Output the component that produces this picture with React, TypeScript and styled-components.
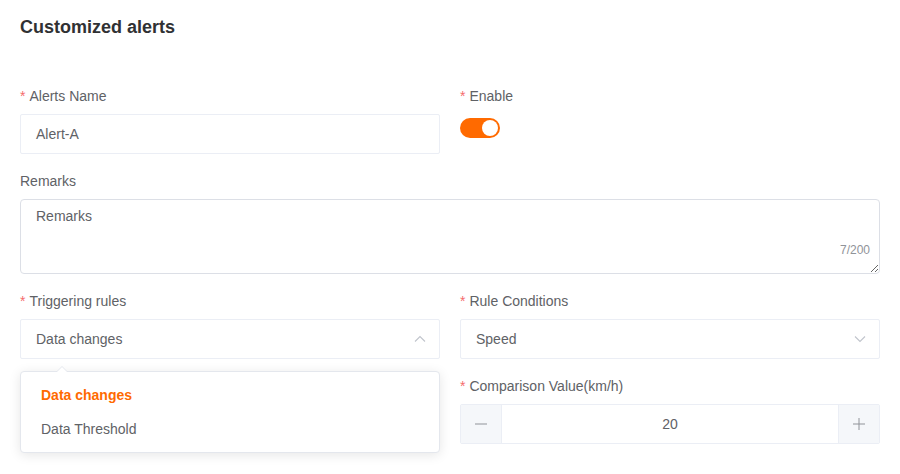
import React from "react";
import styled, { createGlobalStyle } from "styled-components";

const GlobalStyle = createGlobalStyle`
  html, body {
    margin: 0;
    padding: 0;
    background: #ffffff;
  }
  body {
    font-family: "Liberation Sans", Arial, Helvetica, sans-serif;
    color: #606266;
  }
  * {
    box-sizing: border-box;
  }
`;

const Page = styled.div`
  width: 900px;
  height: 474px;
  padding: 16px 20px 0;
  overflow: hidden;
`;

const Title = styled.h2`
  margin: 0;
  height: 22px;
  line-height: 22px;
  font-size: 18px;
  font-weight: 700;
  color: #303133;
`;

const Form = styled.div`
  margin-top: 48px;
  display: grid;
  grid-template-columns: 420px 420px;
  column-gap: 20px;
`;

const Item = styled.div<{ $full?: boolean }>`
  grid-column: ${(p) => (p.$full ? "1 / span 2" : "auto")};
  margin-bottom: 17px;
  position: relative;
`;

const Label = styled.div<{ $required?: boolean }>`
  height: 20px;
  line-height: 20px;
  margin-bottom: 8px;
  font-size: 14px;
  color: #606266;

  &::before {
    content: ${(p) => (p.$required ? '"*"' : "none")};
    color: #f56c6c;
    margin-right: 4px;
  }
`;

const Field = styled.div`
  height: 40px;
  border: 1px solid #ebeef5;
  border-radius: 2px;
  padding: 0 15px;
  display: flex;
  align-items: center;
  justify-content: space-between;
  font-size: 14px;
  color: #606266;
  background: #fff;
`;

const Chevron = styled.svg`
  width: 14px;
  height: 14px;
  margin-right: -3px;
`;

const Switch = styled.div<{ $on?: boolean }>`
  margin-top: 12px;
  width: 40px;
  height: 20px;
  border-radius: 10px;
  background: ${(p) => (p.$on ? "#ff6a00" : "#dcdfe6")};
  position: relative;

  &::after {
    content: "";
    position: absolute;
    top: 2px;
    left: ${(p) => (p.$on ? "22px" : "2px")};
    width: 16px;
    height: 16px;
    border-radius: 50%;
    background: #fff;
  }
`;

const AreaWrap = styled.div`
  position: relative;
  height: 75px;
`;

const TextArea = styled.textarea`
  display: block;
  width: 100%;
  height: 75px;
  padding: 6px 15px;
  border: 1px solid #dcdfe6;
  border-radius: 4px;
  font-family: "Liberation Sans", Arial, sans-serif;
  font-size: 14px;
  line-height: 20px;
  color: #606266;
  resize: vertical;
  outline: none;
`;

const Count = styled.span`
  position: absolute;
  right: 10px;
  bottom: 17px;
  font-size: 12px;
  color: #909399;
  background: #fff;
`;

const Dropdown = styled.div`
  position: absolute;
  top: 80px;
  left: 0;
  width: 420px;
  padding: 6px 0;
  background: #fff;
  border: 1px solid #e4e7ed;
  border-radius: 4px;
  box-shadow: 0 2px 12px 0 rgba(0, 0, 0, 0.1);
  z-index: 5;

  &::before {
    content: "";
    position: absolute;
    top: -6px;
    left: 35px;
    border-width: 0 6px 6px;
    border-style: solid;
    border-color: transparent transparent #e4e7ed;
  }
  &::after {
    content: "";
    position: absolute;
    top: -5px;
    left: 35px;
    border-width: 0 6px 6px;
    border-style: solid;
    border-color: transparent transparent #fff;
  }
`;

const Option = styled.div<{ $selected?: boolean }>`
  height: 34px;
  line-height: 34px;
  padding: 0 20px;
  font-size: 14px;
  font-weight: ${(p) => (p.$selected ? 700 : 400)};
  color: ${(p) => (p.$selected ? "#ff6a00" : "#606266")};
`;

const Stepper = styled.div`
  height: 40px;
  display: flex;
  border: 1px solid #ebeef5;
  border-radius: 2px;
  overflow: hidden;
`;

const StepButton = styled.div<{ $side: "left" | "right" }>`
  width: 41px;
  flex: none;
  background: #f5f7fa;
  display: flex;
  align-items: center;
  justify-content: center;
  color: #909399;
  border-${(p) => (p.$side === "left" ? "right" : "left")}: 1px solid #ebeef5;
`;

const StepValue = styled.div`
  flex: 1;
  display: flex;
  align-items: center;
  justify-content: center;
  font-size: 14px;
  color: #606266;
`;

const ChevronIcon = ({ up }: { up?: boolean }) => (
  <Chevron viewBox="0 0 14 14" fill="none">
    <path
      d={up ? "M2 9.5 L7 4.5 L12 9.5" : "M2 4.5 L7 9.5 L12 4.5"}
      stroke="#c0c4cc"
      strokeWidth="1.1"
    />
  </Chevron>
);

export default function App() {
  return (
    <Page>
      <GlobalStyle />
      <Title>Customized alerts</Title>
      <Form>
        <Item>
          <Label $required>Alerts Name</Label>
          <Field>Alert-A</Field>
        </Item>
        <Item>
          <Label $required>Enable</Label>
          <Switch $on />
        </Item>
        <Item $full>
          <Label>Remarks</Label>
          <AreaWrap>
            <TextArea defaultValue="Remarks" />
            <Count>7/200</Count>
          </AreaWrap>
        </Item>
        <Item>
          <Label $required>Triggering rules</Label>
          <Field>
            Data changes
            <ChevronIcon up />
          </Field>
          <Dropdown>
            <Option $selected>Data changes</Option>
            <Option>Data Threshold</Option>
          </Dropdown>
        </Item>
        <Item>
          <Label $required>Rule Conditions</Label>
          <Field>
            Speed
            <ChevronIcon />
          </Field>
        </Item>
        <Item />
        <Item>
          <Label $required>Comparison Value(km/h)</Label>
          <Stepper>
            <StepButton $side="left">
              <svg width="12" height="12" viewBox="0 0 12 12">
                <path d="M0 6 H12" stroke="#909399" strokeWidth="1" />
              </svg>
            </StepButton>
            <StepValue>20</StepValue>
            <StepButton $side="right">
              <svg width="12" height="12" viewBox="0 0 12 12">
                <path d="M0 6 H12 M6 0 V12" stroke="#909399" strokeWidth="1" />
              </svg>
            </StepButton>
          </Stepper>
        </Item>
      </Form>
    </Page>
  );
}
